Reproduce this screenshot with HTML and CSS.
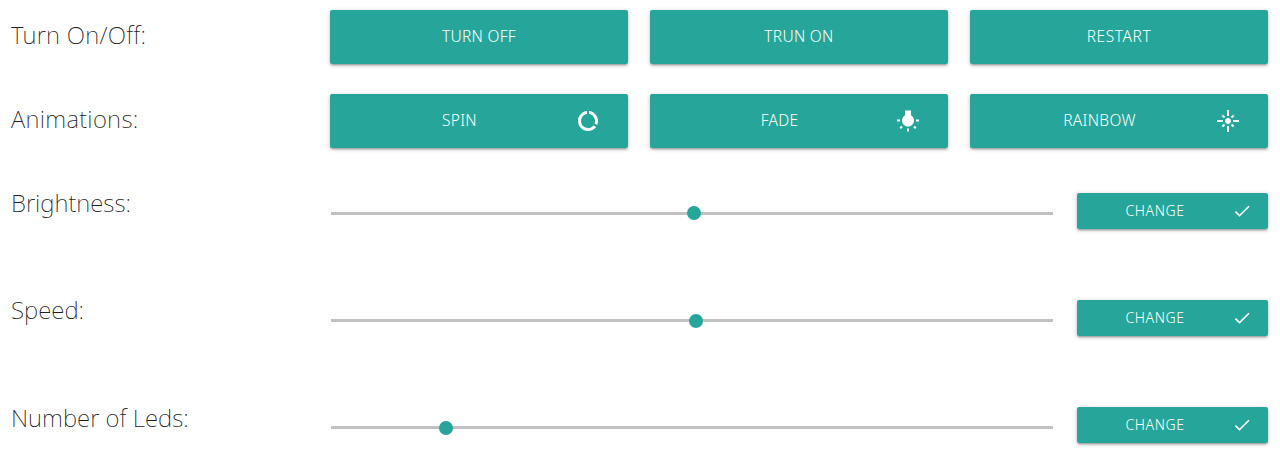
FILE: index.html
```html
<!DOCTYPE html>
<html lang="en">
<head>
<meta charset="utf-8">
<title>LED control</title>
<link rel="stylesheet" href="styles.css">
</head>
<body>
<main class="panel">
  <section class="row">
    <h2 class="label l-turn">Turn On/Off:</h2>
    <button class="btn large"><span>TURN OFF</span></button>
    <button class="btn large"><span>TRUN ON</span></button>
    <button class="btn large restart"><span>RESTART</span></button>
  </section>
  <section class="row">
    <h2 class="label l-anim">Animations:</h2>
    <button class="btn large"><span>SPIN</span><svg class="icon" viewBox="0 0 24 24"><path d="M13 2.05v3.03c3.39.49 6 3.39 6 6.92 0 .9-.18 1.75-.48 2.54l2.6 1.53c.56-1.24.88-2.62.88-4.07 0-5.18-3.95-9.45-9-9.95zM12 19c-3.87 0-7-3.13-7-7 0-3.53 2.61-6.43 6-6.92V2.05c-5.06.5-9 4.76-9 9.95 0 5.52 4.47 10 9.99 10 3.31 0 6.24-1.61 8.06-4.09l-2.6-1.53C16.17 17.98 14.21 19 12 19z"/></svg></button>
    <button class="btn large"><span>FADE</span><svg class="icon" viewBox="0 0 24 24"><path d="M3.55 18.54l1.41 1.41 1.8-1.79-1.41-1.41-1.8 1.79zM11 22.45h2V19.5h-2v2.95zM4 10.5H1v2h3v-2zm11-4.19V1.5H9v4.81C7.21 7.35 6 9.28 6 11.5c0 3.31 2.69 6 6 6s6-2.69 6-6c0-2.22-1.21-4.15-3-5.19zm5 4.19v2h3v-2h-3zm-2.76 7.66l1.79 1.8 1.41-1.41-1.8-1.79-1.4 1.4z"/></svg></button>
    <button class="btn large"><span>RAINBOW</span><svg class="icon" viewBox="0 0 24 24"><path d="M7 11H1v2h6v-2zm2.17-3.24L7.05 5.64 5.64 7.05l2.12 2.12 1.41-1.41zM13 1h-2v6h2V1zm5.36 6.05l-1.41-1.41-2.12 2.12 1.41 1.41 2.12-2.12zM17 11v2h6v-2h-6zm-5-2c-1.66 0-3 1.34-3 3s1.34 3 3 3 3-1.34 3-3-1.34-3-3-3zm2.83 7.24l2.12 2.12 1.41-1.41-2.12-2.12-1.41 1.41zm-9.19.71l1.41 1.41 2.12-2.12-1.41-1.41-2.12 2.12zM11 23h2v-6h-2v6z"/></svg></button>
  </section>
  <section class="row slider-row">
    <h2 class="label">Brightness:</h2>
    <input class="slider slider-brightness" type="range" min="0" max="708" value="356" aria-label="Brightness">
    <button class="btn small"><span>CHANGE</span><svg class="icon" viewBox="0 0 24 24"><path d="M9 16.17L4.83 12l-1.42 1.41L9 19 21 7l-1.41-1.41z"/></svg></button>
  </section>
  <section class="row slider-row">
    <h2 class="label">Speed:</h2>
    <input class="slider" type="range" min="0" max="708" value="358" aria-label="Speed">
    <button class="btn small"><span>CHANGE</span><svg class="icon" viewBox="0 0 24 24"><path d="M9 16.17L4.83 12l-1.42 1.41L9 19 21 7l-1.41-1.41z"/></svg></button>
  </section>
  <section class="row slider-row last">
    <h2 class="label l-leds">Number of Leds:</h2>
    <input class="slider" type="range" min="0" max="708" value="108" aria-label="Number of Leds">
    <button class="btn small"><span>CHANGE</span><svg class="icon" viewBox="0 0 24 24"><path d="M9 16.17L4.83 12l-1.42 1.41L9 19 21 7l-1.41-1.41z"/></svg></button>
  </section>
</main>
</body>
</html>
```
FILE: styles.css
```css
* { box-sizing: border-box; }
body {
  margin: 0;
  background: #fff;
  color: rgba(0, 0, 0, .9);
  font-family: "Noto Sans", sans-serif;
}
.panel { padding: 10px 12px 0 10px; }
.row {
  display: grid;
  grid-template-columns: 298px 298px 298px 298px;
  column-gap: 22px;
  height: 84px;
  align-items: start;
}
.slider-row {
  grid-template-columns: 321px 746px 191px;
  column-gap: 0;
  height: 107px;
  padding-top: 15px;
}
.slider-row.last { height: 62px; }
.slider-row .label { margin-top: -15px; }
.label {
  margin: 0;
  padding-left: 1px;
  font-size: 24px;
  line-height: 50px;
  font-weight: 250;
  white-space: nowrap;
}
.l-turn { letter-spacing: .25px; }
.l-anim { letter-spacing: .3px; }
.label.l-leds { line-height: 52px; }
.btn {
  display: flex;
  align-items: center;
  margin: 0;
  border: 0;
  border-radius: 2px;
  background: #26a69a;
  color: #fff;
  font-family: inherit;
  font-weight: 300;
  box-shadow: 0 2px 2px 0 rgba(0,0,0,.14), 0 3px 1px -2px rgba(0,0,0,.12), 0 1px 5px 0 rgba(0,0,0,.2);
}
.btn span { flex: 1; text-align: center; }
.large span { padding-bottom: 2px; }
.large { height: 54px; padding: 0 28px; font-size: 15.5px; letter-spacing: .3px; }
.restart { letter-spacing: .6px; }
.small { height: 36px; padding: 0 16px; font-size: 14px; letter-spacing: .6px; }
.small span { padding-bottom: 1px; }
.icon { width: 24px; height: 24px; margin-left: 15px; fill: #fff; }
.small .icon { width: 20px; height: 20px; }
.slider {
  appearance: none;
  width: 722px;
  height: 14px;
  margin: 13px 0 0;
  background: transparent;
}
.slider::-webkit-slider-runnable-track {
  height: 3px;
  background: #c2c0c2;
}
.slider::-webkit-slider-thumb {
  appearance: none;
  width: 14px;
  height: 14px;
  margin-top: -5px;
  border-radius: 50%;
  background: #26a69a;
}
.slider-brightness::-webkit-slider-thumb { margin-top: -6px; }
```
